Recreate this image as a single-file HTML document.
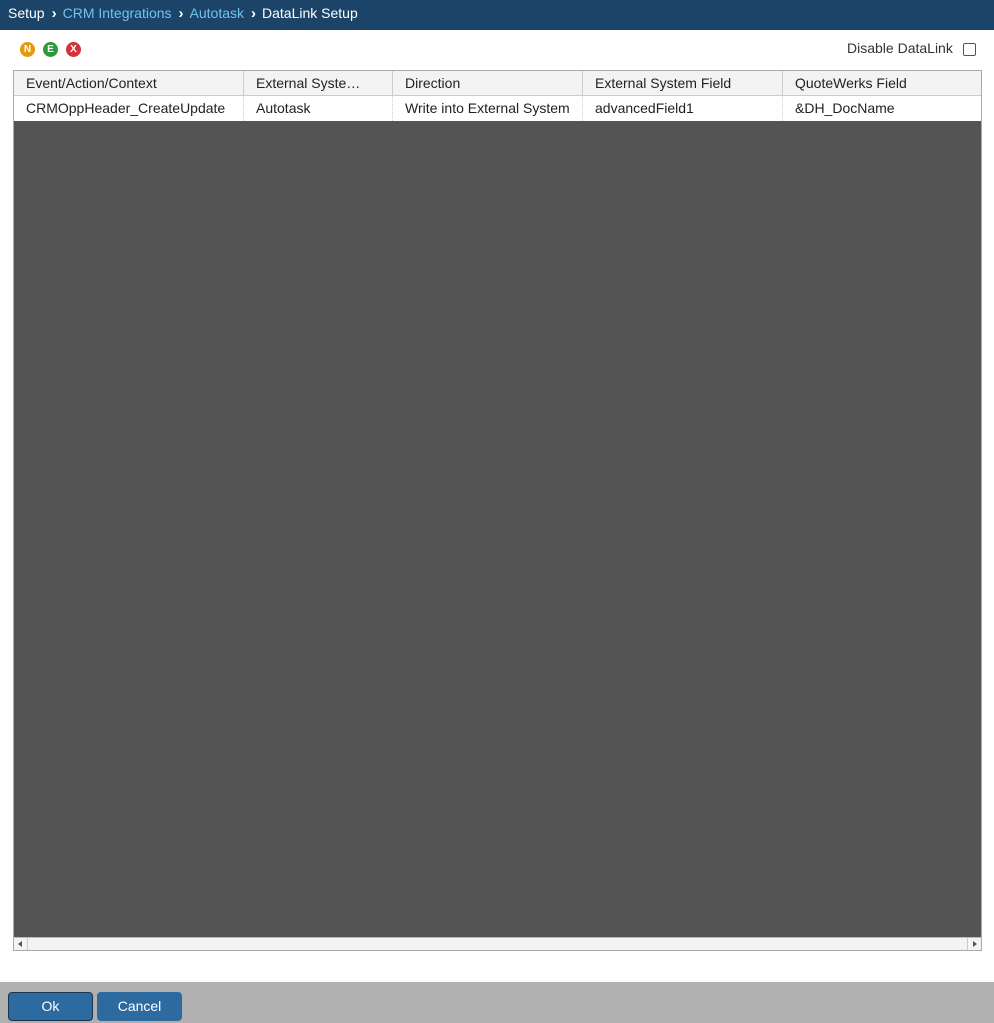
<!DOCTYPE html>
<html><head><style>
*{margin:0;padding:0;box-sizing:border-box}
body{width:994px;height:1023px;position:relative;background:#fff;font-family:"Liberation Sans",Arial,sans-serif;font-size:14px;color:#222;overflow:hidden}
.top{position:absolute;left:0;top:0;width:994px;height:30px;background:#1b4468;color:#fff;font-size:14px;line-height:27px;padding-left:8px}
.top .l{color:#6fc3ef}
.top .c{display:inline-block;margin:0 6px 0 7px;font-size:15px;font-weight:bold}
.ic{position:absolute;top:42px;width:15px;height:15px;border-radius:50%;color:#fff;font-size:10px;font-weight:bold;text-align:center;line-height:15px}
.dis{position:absolute;left:847px;top:40px;font-size:14px;color:#333}
.cb{position:absolute;left:963px;top:43px;width:13px;height:13px;border:1px solid #555;border-radius:2px}
.grid{position:absolute;left:13px;top:70px;width:969px;height:881px;border:1px solid #aaa;background:#545454}
.hdr{position:absolute;left:0;top:0;width:967px;height:25px;background:#f3f3f3;border-bottom:1px solid #ccc}
.row{position:absolute;left:0;top:25px;width:967px;height:25px;background:#fff}
.cell{position:absolute;top:0;height:25px;line-height:24px;padding-left:12px;white-space:nowrap}
.hdr .cell{border-left:1px solid #ccc}
.row .cell{border-left:1px dotted #ccc}
.sb{position:absolute;left:0;bottom:0;width:967px;height:13px;background:#f3f3f3;border-top:1px solid #bbb}
.foot{position:absolute;left:0;top:982px;width:994px;height:41px;background:#b0b0b0}
.btn{position:absolute;top:10px;height:29px;background:#2c6aa0;color:#fff;border-radius:4px;text-align:center;line-height:27px;font-size:14px;border:1px solid #2c6aa0}
</style></head><body>
<div class="top">Setup<span class="c">›</span><span class="l">CRM Integrations</span><span class="c">›</span><span class="l">Autotask</span><span class="c">›</span>DataLink Setup</div>
<div class="ic" style="left:20px;background:#e39a0f">N</div>
<div class="ic" style="left:43px;background:#2a9a3a">E</div>
<div class="ic" style="left:66px;background:#d0343a">X</div>
<div class="dis">Disable DataLink</div><div class="cb"></div>
<div class="grid">
<div class="hdr">
<div class="cell" style="left:0;border-left:none">Event/Action/Context</div>
<div class="cell" style="left:229px">External Syste…</div>
<div class="cell" style="left:378px">Direction</div>
<div class="cell" style="left:568px">External System Field</div>
<div class="cell" style="left:768px">QuoteWerks Field</div>
</div>
<div class="row">
<div class="cell" style="left:0;border-left:none">CRMOppHeader_CreateUpdate</div>
<div class="cell" style="left:229px">Autotask</div>
<div class="cell" style="left:378px">Write into External System</div>
<div class="cell" style="left:568px">advancedField1</div>
<div class="cell" style="left:768px">&amp;DH_DocName</div>
</div>
<div class="sb">
<div style="position:absolute;left:0;top:0;width:14px;height:12px;border-right:1px solid #ccc"><div style="position:absolute;left:4px;top:3px;border-right:4px solid #555;border-top:3px solid transparent;border-bottom:3px solid transparent"></div></div>
<div style="position:absolute;right:0;top:0;width:14px;height:12px;border-left:1px solid #ccc"><div style="position:absolute;left:5px;top:3px;border-left:4px solid #555;border-top:3px solid transparent;border-bottom:3px solid transparent"></div></div>
</div>
</div>
<div class="foot">
<div class="btn" style="left:8px;width:85px;border-color:#1a3550">Ok</div>
<div class="btn" style="left:97px;width:85px">Cancel</div>
</div>
</body></html>
